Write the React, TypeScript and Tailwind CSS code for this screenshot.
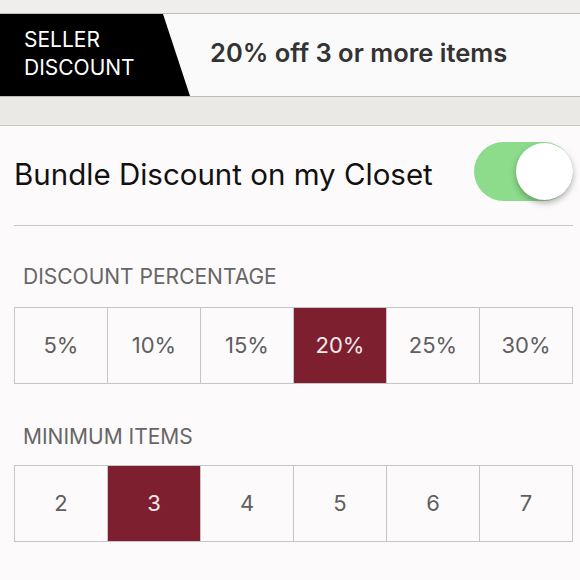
import React, { useState } from 'react';

const percentages = ['5%', '10%', '15%', '20%', '25%', '30%'];
const minItems = ['2', '3', '4', '5', '6', '7'];

const Segmented = ({ options, value, onChange }: { options: string[]; value: string; onChange: (v: string) => void }) => (
    <div className="flex h-[77px] border border-[#c6c6c6]">
        {options.map((opt, i) => (
            <button
                key={opt}
                onClick={() => onChange(opt)}
                className={`flex-1 flex items-center justify-center text-[22px] ${i > 0 ? 'border-l border-[#c6c6c6]' : ''} ${value === opt ? 'bg-[#7e1f2f] text-[#f6e9eb]' : 'bg-[#fcfafb] text-[#5f5f5f]'}`}
            >
                {opt}
            </button>
        ))}
    </div>
);

export default function App() {
    const [enabled, setEnabled] = useState(true);
    const [percent, setPercent] = useState('20%');
    const [items, setItems] = useState('3');

    return (
        <div className="w-[580px] h-[580px] overflow-hidden bg-[#fcfafb] font-['Inter',sans-serif]">
            <div className="h-[13px] bg-[#efeeec]" />
            <div className="h-[84px] flex border-y border-[#bdbcbb] bg-[#fbfafa]">
                <div className="w-[190px] bg-black [clip-path:polygon(0_0,163px_0,190px_100%,0_100%)] flex flex-col justify-center pl-[24px] text-white text-[21px] leading-[28px] pb-[2px]">
                    <span>SELLER</span>
                    <span>DISCOUNT</span>
                </div>
                <div className="flex items-center pl-[20px] pb-[4px] text-[25.5px] font-semibold text-[#333333]">
                    20% off 3 or more items
                </div>
            </div>
            <div className="h-[29px] bg-[#ebe9e6] border-b border-[#cac9c7]" />

            <div className="pl-[14px] pr-[7px]">
                <div className="h-[100px] flex items-center justify-between border-b border-[#c8c8c8]">
                    <span className="text-[29.5px] text-[#111111] pb-[2px]">Bundle Discount on my Closet</span>
                    <button
                        onClick={() => setEnabled(!enabled)}
                        className={`relative w-[99px] h-[59px] rounded-full mb-[8px] ${enabled ? 'bg-[#8cdc8c]' : 'bg-[#e5e5e5]'}`}
                    >
                        <span className={`absolute top-[1px] w-[57px] h-[57px] rounded-full bg-white shadow-[0_3px_6px_rgba(0,0,0,0.3)] ${enabled ? 'right-0' : 'left-0'}`} />
                    </button>
                </div>

                <div className="pt-[38px] pb-[18px] pl-[9px] text-[21px] text-[#666666] leading-[25px]">DISCOUNT PERCENTAGE</div>
                <Segmented options={percentages} value={percent} onChange={setPercent} />

                <div className="pt-[40px] pb-[16px] pl-[9px] text-[21px] text-[#666666] leading-[25px]">MINIMUM ITEMS</div>
                <Segmented options={minItems} value={items} onChange={setItems} />
            </div>
        </div>
    );
}
